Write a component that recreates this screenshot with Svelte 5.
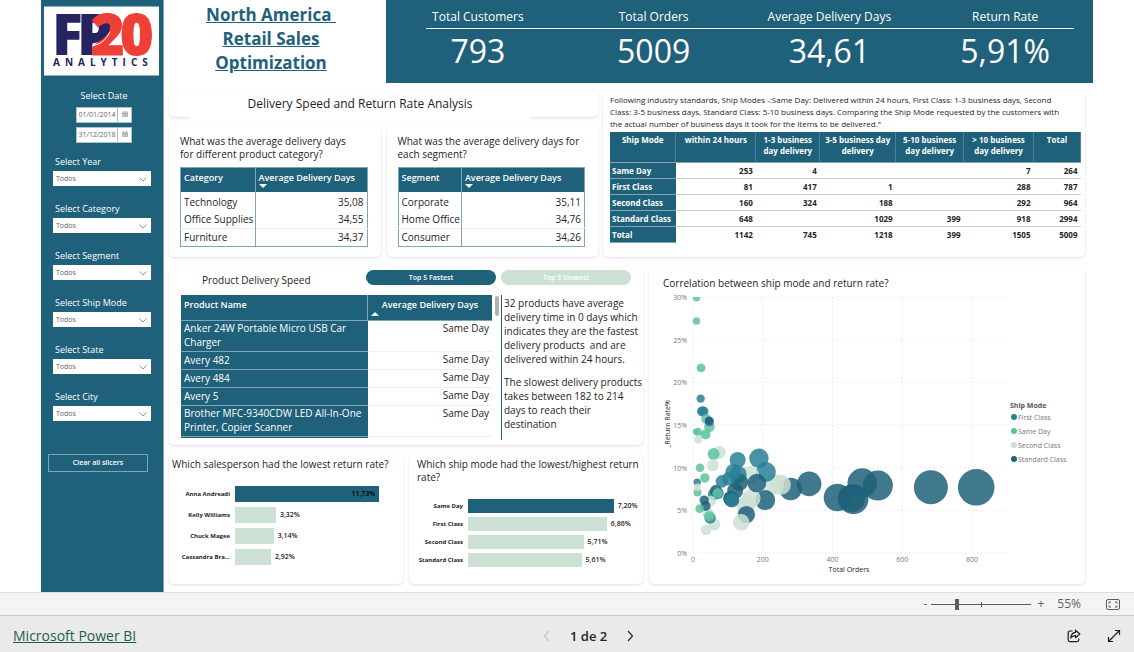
<script lang="ts">
    type Bubble = [orders: number, rate: number, radius: number];

    const slicers = ['Year', 'Category', 'Segment', 'Ship Mode', 'State', 'City'];
    const kpis = [
        { label: 'Total Customers', value: '793' },
        { label: 'Total Orders', value: '5009' },
        { label: 'Average Delivery Days', value: '34,61' },
        { label: 'Return Rate', value: '5,91%' }
    ];
    const dayTables = [
        {
            question: 'What was the average delivery days for different product category?',
            head: 'Category',
            first: 40,
            rows: [['Technology', '35,08'], ['Office Supplies', '34,55'], ['Furniture', '34,37']]
        },
        {
            question: 'What was the average delivery days for each segment?',
            head: 'Segment',
            first: 34,
            rows: [['Corporate', '35,11'], ['Home Office', '34,76'], ['Consumer', '34,26']]
        }
    ];
    const matrixHead = ['Ship Mode', 'within 24 hours', '1-3 business day delivery', '3-5 business day delivery', '5-10 business day delivery', '> 10 business day delivery', 'Total'];
    const matrixCols = [66, 80, 64, 76, 68, 70, 47];
    const matrix = [
        ['Same Day', '253', '4', '', '', '7', '264'],
        ['First Class', '81', '417', '1', '', '288', '787'],
        ['Second Class', '160', '324', '188', '', '292', '964'],
        ['Standard Class', '648', '', '1029', '399', '918', '2994'],
        ['Total', '1142', '745', '1218', '399', '1505', '5009']
    ];
    const products = [
        'Anker 24W Portable Micro USB Car Charger',
        'Avery 482',
        'Avery 484',
        'Avery 5',
        'Brother MFC-9340CDW LED All-In-One Printer, Copier Scanner'
    ];
    const salespeople = [
        { name: 'Anna Andreadi', rate: 11.73 },
        { name: 'Kelly Williams', rate: 3.32 },
        { name: 'Chuck Magee', rate: 3.14 },
        { name: 'Cassandra Bra...', rate: 2.92 }
    ];
    const shipModes = [
        { name: 'Same Day', rate: 7.2 },
        { name: 'First Class', rate: 6.86 },
        { name: 'Second Class', rate: 5.71 },
        { name: 'Standard Class', rate: 5.61 }
    ];

    const series: { name: string; color: string; points: Bubble[] }[] = [
        {
            name: 'First Class',
            color: '#2a8096',
            points: [[189, 11.1, 9.7], [209, 9.5, 10], [128, 10.9, 8], [116, 9.5, 8], [129, 9.2, 8.7], [102, 8.7, 6.7], [83, 8.4, 6.3], [60, 6.9, 6], [72, 7, 5.7], [12, 8.3, 3.7], [49, 4.1, 5.7], [22, 18.1, 4.2], [26, 16.6, 5], [30, 16.6, 5], [47, 15.4, 4.7], [112, 6.2, 7.3]]
        },
        {
            name: 'Same Day',
            color: '#5cc2a0',
            points: [[10, 29.9, 3.5], [10, 27.2, 3.7], [23, 21.7, 4.4], [38, 15.7, 5], [47, 14.8, 5.3], [36, 13.9, 5], [14, 14.2, 4], [8, 14.2, 3], [59, 11.6, 6], [20, 10, 4.3], [34, 8.8, 4.7], [13, 7.1, 4], [19, 5.2, 4.3], [70, 7, 5], [47, 4.3, 5.3]]
        },
        {
            name: 'Second Class',
            color: '#cce0d3',
            points: [[15, 13.3, 4], [76, 11.8, 6.3], [57, 10.3, 6], [163, 9.1, 9.3], [251, 8, 10.3], [232, 8, 10.3], [167, 6.4, 9.3], [156, 5.8, 9], [150, 5.4, 8.7], [138, 3.6, 8.3], [61, 3.3, 6], [37, 2.7, 5.3], [43, 4.6, 5.7], [51, 6.1, 5.3], [13, 7.7, 3.7]]
        },
        {
            name: 'Standard Class',
            color: '#1f607a',
            points: [[812, 7.7, 18.3], [682, 7.7, 17], [530, 7.9, 15], [485, 8.2, 14.7], [460, 6.3, 15], [454, 6.4, 13.7], [414, 6.5, 13.7], [333, 8.1, 12.3], [280, 7.5, 11.3], [207, 6.2, 10], [183, 8.2, 9.3], [153, 4.5, 8.7], [121, 7.3, 8], [133, 8.3, 8.7], [110, 6.3, 7.7], [108, 6.4, 7.5], [66, 7.3, 6], [32, 6.2, 4.7], [36, 5.5, 5], [46, 15.5, 4.2]]
        }
    ];
    // big bubbles first so the small ones stay visible
    const bubbles = series
        .flatMap(s => s.points.map(([orders, rate, r]) => ({ x: px(orders), y: py(rate), r, color: s.color })))
        .sort((a, b) => b.r - a.r);

    function px(orders: number) {
        return 44 + orders * 0.3488;
    }
    function py(rate: number) {
        return 263 - rate * 8.53;
    }
    function percent(n: number) {
        return n.toFixed(2).replace('.', ',') + '%';
    }

    let zoom = $state(55);
    let page = $state(1);
    let speed = $state('fastest');
</script>

{#snippet bars(rows, scale, kind)}
    <div class="bars {kind}">
        {#each rows as row, i}
            <span class="bar-label">{row.name}</span>
            <div class="track">
                <div class="bar" class:top={i === 0} style="width: {row.rate / scale * 100}%">
                    {#if row.rate > 10}{percent(row.rate)}{/if}
                </div>
                {#if row.rate <= 10}<span>{percent(row.rate)}</span>{/if}
            </div>
        {/each}
    </div>
{/snippet}

<div class="report">
    <aside>
        <svg class="logo" viewBox="0 0 115 69" role="img" aria-label="FP20 Analytics">
            <rect width="115" height="69" fill="#fff" />
            <text y="48" class="logo-main"><tspan class="navy" x="8 33">FP</tspan><tspan class="red" x="47 76">20</tspan></text>
            <path d="M48 37C55 36 61 32 66 24C65 18 60 17 55 20C55 26 52 29 47 30Z" fill="#272361" />
            <path d="M49 39C56 38 62 34 66 25" fill="none" stroke="#fff" stroke-width="1" />
            <text x="9" y="59" class="logo-sub">ANALYTICS</text>
        </svg>

        <fieldset class="dates">
            <legend>Select Date</legend>
            {#each ['01/01/2014', '31/12/2018'] as date}
                <div class="date">
                    <input type="text" value={date} aria-label="Date {date}">
                    <button aria-label="Open calendar">
                        <svg viewBox="0 0 8 8" width="6" height="6"><path d="M.5 1.5h7v6h-7zM.5 3.3h7M.5 5.2h7M3 3.3v4M5.2 3.3v4M2 .2v1.5M6 .2v1.5" fill="none" stroke="#889" stroke-width=".8" /></svg>
                    </button>
                </div>
            {/each}
        </fieldset>

        {#each slicers as slicer, i}
            <div class="slicer">
                <label for="slicer{i}">Select {slicer}</label>
                <div class="dropdown">
                    <select id="slicer{i}"><option>Todos</option></select>
                    <svg viewBox="0 0 8 5" width="8" height="5"><path d="M.5.5 4 4 7.5.5" fill="none" stroke="#667" stroke-width=".7" /></svg>
                </div>
            </div>
        {/each}
        <button class="clear">Clear all slicers</button>
    </aside>

    <main>
        <header>
            <h1>North America&nbsp;<br>Retail Sales<br>Optimization</h1>
            <div class="kpis">
                {#each kpis as kpi}
                    <span class="kpi-label">{kpi.label}</span>
                {/each}
                <div class="rule"></div>
                {#each kpis as kpi}
                    <strong>{kpi.value}</strong>
                {/each}
            </div>
        </header>

        <div class="row upper">
            <div class="stack">
                <div class="card heading"><h2>Delivery Speed and Return Rate Analysis</h2></div>
                <div class="pair">
                    {#each dayTables as t}
                        <section class="card days">
                            <h3>{t.question}</h3>
                            <table>
                                <colgroup><col style="width: {t.first}%"><col></colgroup>
                                <thead>
                                    <tr><th>{t.head}</th><th>Average Delivery Days<i class="down"></i></th></tr>
                                </thead>
                                <tbody>
                                    {#each t.rows as [name, value]}
                                        <tr><td>{name}</td><td class="num">{value}</td></tr>
                                    {/each}
                                </tbody>
                            </table>
                        </section>
                    {/each}
                </div>
            </div>
            <section class="card matrix">
                <p>Following industry standards, Ship Modes -:Same Day: Delivered within 24 hours, First Class: 1-3 business days, Second Class: 3-5 business days, Standard Class: 5-10 business days. Comparing the Ship Mode requested by the customers with the actual number of business days it took for the items to be delivered."</p>
                <table>
                    <colgroup>
                        {#each matrixCols as w}<col style="width: {w / 4.71}%">{/each}
                    </colgroup>
                    <thead>
                        <tr>{#each matrixHead as h}<th>{h}</th>{/each}</tr>
                    </thead>
                    <tbody>
                        {#each matrix as [mode, ...cells]}
                            <tr>
                                <th>{mode}</th>
                                {#each cells as cell}<td>{cell}</td>{/each}
                            </tr>
                        {/each}
                    </tbody>
                </table>
            </section>
        </div>

        <div class="row lower">
            <div class="stack">
                <section class="card products">
                    <div class="tabs">
                        <h3>Product Delivery Speed</h3>
                        <button class:off={speed !== 'fastest'} onclick={() => speed = 'fastest'}>Top 5 Fastest</button>
                        <button class:off={speed !== 'slowest'} onclick={() => speed = 'slowest'}>Top 5 Slowest</button>
                    </div>
                    <div class="split">
                        <div class="scroll">
                            <table>
                                <colgroup><col style="width: 60%"><col></colgroup>
                                <thead>
                                    <tr><th>Product Name</th><th class="sorted">Average Delivery Days<i class="up"></i></th></tr>
                                </thead>
                                <tbody>
                                    {#each products as product}
                                        <tr><th>{product}</th><td class="num">Same Day</td></tr>
                                    {/each}
                                    <tr><th></th><td></td></tr>
                                </tbody>
                            </table>
                        </div>
                        <div class="thumb"></div>
                        <div class="note">
                            <p>32 products have average delivery time in 0 days which indicates they are the fastest delivery products&nbsp; and are delivered within 24 hours.</p>
                            <p>The slowest delivery products takes between 182 to 214 <br>days to reach their <br>destination</p>
                        </div>
                    </div>
                </section>
                <div class="pair">
                    <section class="card chart">
                        <h3>Which salesperson had the lowest return rate?</h3>
                        {@render bars(salespeople, 13.4, 'people')}
                    </section>
                    <section class="card chart">
                        <h3>Which ship mode had the lowest/highest return rate?</h3>
                        {@render bars(shipModes, 8.5, 'modes')}
                    </section>
                </div>
            </div>

            <section class="card scatter">
                <h3>Correlation between ship mode and return rate?</h3>
                <svg viewBox="0 0 436 286">
                    <clipPath id="plot"><rect x="38" y="7" width="330" height="260" /></clipPath>
                    <g class="grid">
                        {#each [0, 5, 10, 15, 20, 25, 30] as r}
                            <line x1="44" x2="357" y1={py(r)} y2={py(r)} />
                            <text x="38" y={py(r) + 3} text-anchor="end">{r}%</text>
                        {/each}
                        {#each [0, 200, 400, 600, 800] as o}
                            <line x1={px(o)} x2={px(o)} y1="7" y2="263" />
                            <text x={px(o)} y="272" text-anchor="middle">{o}</text>
                        {/each}
                    </g>
                    <g clip-path="url(#plot)">
                        {#each bubbles as b}
                            <circle cx={b.x} cy={b.y} r={b.r} fill={b.color} fill-opacity=".85" />
                        {/each}
                    </g>
                    <text class="axis" x="200" y="282" text-anchor="middle">Total Orders</text>
                    <text class="axis" transform="translate(21 134) rotate(-90)" text-anchor="middle">_Return Rate%</text>
                    <text class="legend-title" x="361" y="118">Ship Mode</text>
                    {#each series as s, i}
                        <circle cx="365" cy={127 + i * 14} r="3" fill={s.color} />
                        <text class="legend" x="369" y={130 + i * 14}>{s.name}</text>
                    {/each}
                </svg>
            </section>
        </div>
    </main>
</div>

<div class="zoombar">
    <button aria-label="Zoom out" onclick={() => zoom -= 5}>-</button>
    <input type="range" min="10" max="190" bind:value={zoom} aria-label="Zoom">
    <button aria-label="Zoom in" onclick={() => zoom += 5}>+</button>
    <span>{zoom}%</span>
    <button class="fit" aria-label="Fit to page">
        <svg viewBox="0 0 14 11" width="14" height="11"><rect x=".5" y=".5" width="13" height="10" rx="1.5" fill="none" stroke="#605e5c" /><path d="M3 4.5V3h2M9 3h2v1.5M11 6.5V8H9M5 8H3V6.5" fill="none" stroke="#605e5c" /></svg>
    </button>
</div>

<footer>
    <a href="https://powerbi.microsoft.com">Microsoft Power BI</a>
    <nav>
        <button disabled={page === 1} onclick={() => page--} aria-label="Previous page">
            <svg viewBox="0 0 7 12" width="7" height="12"><path d="M6 1 1.5 6 6 11" fill="none" stroke="currentColor" stroke-width="1.2" /></svg>
        </button>
        <span>{page} de 2</span>
        <button disabled={page === 2} onclick={() => page++} aria-label="Next page">
            <svg viewBox="0 0 7 12" width="7" height="12"><path d="M1 1 5.5 6 1 11" fill="none" stroke="currentColor" stroke-width="1.2" /></svg>
        </button>
    </nav>
    <div class="actions">
        <button aria-label="Share">
            <svg viewBox="0 0 14 14" width="14" height="14"><path d="M5.5 2H3A1.8 1.8 0 0 0 1.2 3.8v7A1.8 1.8 0 0 0 3 12.6h7a1.8 1.8 0 0 0 1.8-1.8V9.5M8.5 1.2 12.8 5 8.5 8.7V6.6C6.5 6.5 5 7.2 3.8 9 4 5.6 5.8 3.6 8.5 3.3Z" fill="none" stroke="#1b1a19" stroke-width="1.2" stroke-linejoin="round" /></svg>
        </button>
        <button aria-label="Full screen">
            <svg viewBox="0 0 14 14" width="14" height="14"><path d="M1.5 12.5 12.5 1.5M8 1.5h4.5V6M1.5 8v4.5H6" fill="none" stroke="#1b1a19" stroke-width="1.2" /></svg>
        </button>
    </div>
</footer>

<style>
    :global(body) {
        margin: 0;
        background: #fff;
    }
    :global(#app) {
        --teal: #1f607a;
        --mint: #cce0d3;
        --line: #7fa6b4;
        font-family: "Open Sans", "Noto Sans", sans-serif;
        font-size: 10px;
        line-height: 14px;
        color: #252423;
    }
    button, input, select {
        font: inherit;
        color: inherit;
        padding: 0;
        margin: 0;
        border: 0;
        background: none;
        border-radius: 0;
    }
    h1, h2, h3, p {
        margin: 0;
        font-weight: 400;
    }
    h3 {
        font-size: 10px;
        line-height: 13px;
    }
    table {
        width: 100%;
        border-collapse: collapse;
        table-layout: fixed;
    }
    td, th {
        padding: 0 3px;
        text-align: left;
        font-weight: 400;
    }

    .report {
        display: flex;
        min-height: 592px;
        padding: 0 41px;
    }
    aside {
        box-sizing: border-box;
        width: 123px;
        flex: none;
        padding: 6px 3px 0;
        background: var(--teal);
        border-right: 1px solid var(--line);
        color: #fff;
        font-size: 9px;
        line-height: 12px;
    }
    .logo {
        display: block;
        width: 115px;
        height: 70px;
    }
    .logo-main {
        font: 800 57px "Open Sans", sans-serif;
    }
    .navy {
        fill: #272361;
    }
    .red {
        fill: #ee4036;
        stroke: #ee4036;
    }
    .logo-sub {
        font: 700 10px "Open Sans", sans-serif;
        letter-spacing: 5px;
        fill: #272361;
    }
    .dates {
        border: 0;
        margin: 14px 0 13px;
        padding: 0 0 0 4px;
        display: flex;
        flex-direction: column;
        align-items: center;
        gap: 4px;
    }
    legend {
        margin: 0 auto;
        padding: 0 0 5px;
    }
    .date {
        display: flex;
        height: 14px;
        border: 1px solid #a9c3cd;
        background: #fff;
        color: #666;
        font-size: 7px;
    }
    .date input {
        width: 40px;
        text-align: center;
    }
    .date button {
        width: 14px;
        border-left: 1px solid #bbb;
        line-height: 8px;
    }
    .slicer {
        margin: 0 9px 17px;
    }
    .slicer label {
        display: block;
        padding: 0 2px 3px;
    }
    .dropdown {
        position: relative;
        display: flex;
    }
    .dropdown select {
        appearance: none;
        width: 100%;
        height: 15px;
        padding: 0 3px;
        background: #fff;
        color: #666;
        font-size: 7px;
    }
    .dropdown svg {
        position: absolute;
        right: 4px;
        top: 6px;
        pointer-events: none;
    }
    .clear {
        display: block;
        width: 100px;
        height: 18px;
        margin: 33px 4px 0;
        border: 1px solid var(--line);
        font-size: 7px;
        font-weight: 600;
    }

    main {
        flex: 1;
        min-width: 0;
    }
    header {
        display: flex;
        min-height: 83px;
    }
    h1 {
        width: 214px;
        padding: 3px 8px 0 0;
        color: var(--teal);
        font-size: 17px;
        line-height: 24px;
        font-weight: 700;
        text-align: center;
        text-decoration: underline;
    }
    .kpis {
        flex: 1;
        display: grid;
        grid-template-columns: repeat(4, 1fr);
        align-content: start;
        padding: 8px 0 0 4px;
        background: var(--teal);
        color: #fff;
        text-align: center;
    }
    .kpi-label {
        font-size: 12px;
        line-height: 17px;
        padding-bottom: 3px;
    }
    .rule {
        grid-column: 1 / -1;
        height: 1px;
        margin: 0 19px 0 36px;
        background: #fff;
    }
    .kpis strong {
        font-size: 32px;
        line-height: 44px;
        font-weight: 400;
    }

    .row {
        display: grid;
        padding: 0 8px 0 5px;
    }
    .upper {
        grid-template-columns: 429fr 482fr;
        gap: 5px;
        padding-top: 8px;
    }
    .lower {
        grid-template-columns: 474fr 436fr;
        gap: 6px;
        padding-top: 10px;
    }
    .stack {
        display: flex;
        flex-direction: column;
        gap: 8px;
        min-width: 0;
    }
    .lower .stack {
        gap: 10px;
    }
    .pair {
        display: grid;
        grid-template-columns: 1fr 1fr;
        gap: 6px;
        flex: 1;
    }
    .card {
        min-width: 0;
        box-sizing: border-box;
        border-radius: 5px;
        background: #fff;
        box-shadow: 0 1px 3px #e2d9f3;
    }
    .heading {
        height: 26px;
    }
    h2 {
        height: 30px;
        margin: 0 68px 0 21px;
        background: #fff;
        font-size: 12px;
        line-height: 25px;
        text-align: center;
    }

    .days {
        height: 132px;
        padding: 10px 13px 0 11px;
    }
    .days h3 {
        padding-right: 8px;
    }
    .days + .days h3 {
        padding-right: 0;
    }
    .days table {
        margin-top: 6px;
        border: 1px solid var(--line);
    }
    .days thead th {
        height: 20px;
        padding-top: 4px;
        background: var(--teal);
        color: #fff;
        font-size: 9px;
        font-weight: 600;
        line-height: 12px;
        vertical-align: top;
        white-space: nowrap;
    }
    .days td {
        height: 17px;
        line-height: 17px;
        white-space: nowrap;
    }
    .days tbody tr:first-child td {
        padding-top: 2px;
    }
    .days th + th, .days td + td {
        border-left: 1px solid var(--line);
    }
    .days tr:last-child td {
        border-top: 1px solid #eee;
    }
    .num {
        text-align: right;
    }
    i {
        display: block;
        width: 0;
        height: 0;
        border: 4px solid transparent;
    }
    .down {
        border-top-color: #fff;
        border-bottom: 0;
    }
    .up {
        border-bottom-color: #fff;
        border-top: 0;
    }

    .matrix {
        padding: 3px 4px 0 7px;
    }
    .matrix p {
        padding: 0 10px 2px 0;
        font-size: 8px;
        line-height: 12px;
    }
    .matrix th, .matrix td {
        padding: 0 3px;
        height: 15px;
        line-height: 12px;
        font-size: 8px;
        font-weight: 700;
        border-bottom: 1px solid #ccc;
    }
    .matrix th {
        background: var(--teal);
        color: #fff;
        padding: 0 2px;
        border-color: var(--line);
        white-space: nowrap;
    }
    .matrix thead th {
        height: 28px;
        padding-top: 2px;
        line-height: 11px;
        vertical-align: top;
        text-align: center;
        white-space: normal;
        border-right: 1px solid #4b8095;
    }
    .matrix td {
        text-align: right;
    }
    .matrix tr:last-child td {
        border: 0;
    }

    .products {
        height: 178px;
        padding: 3px 0 0 12px;
    }
    .tabs {
        display: flex;
        gap: 5px;
        padding-right: 12px;
    }
    .tabs h3 {
        flex: 1;
        padding: 4px 0 0 21px;
    }
    .tabs button {
        width: 130px;
        height: 15px;
        border-radius: 8px;
        background: var(--teal);
        color: #fff;
        font-size: 7px;
        font-weight: 600;
    }
    .tabs button.off {
        background: var(--mint);
    }
    .split {
        display: flex;
        margin-top: 8px;
    }
    .scroll {
        flex: 1;
        height: 143px;
        overflow: hidden;
    }
    .products th {
        background: var(--teal);
        color: #fff;
        border-bottom: 1px solid var(--line);
        padding-bottom: 2px;
        line-height: 14px;
        font-weight: 500;
    }
    .products thead th {
        height: 21px;
        padding-top: 2px;
        vertical-align: top;
        font-weight: 600;
        font-size: 9px;
        line-height: 16px;
        white-space: nowrap;
    }
    .products .sorted {
        border-left: 1px solid var(--line);
        text-align: center;
    }
    .sorted i {
        margin-top: -1px;
    }
    .products td {
        height: 17px;
        vertical-align: top;
        border-bottom: 1px solid #eee;
    }
    .thumb {
        width: 4px;
        height: 20px;
        margin: 1px 2px 0 3px;
        border-radius: 2px;
        background: #b3b0ad;
    }
    .note {
        width: 139px;
        padding-left: 2px;
        border-left: 1px solid var(--teal);
    }
    .note p {
        margin: 1px 0 9px;
    }

    .chart {
        min-height: 129px;
        padding: 3px 3px 0 3px;
    }
    .chart + .chart {
        padding-left: 8px;
    }
    .bars {
        display: grid;
        grid-template-columns: 58px 1fr;
        column-gap: 5px;
        row-gap: 5px;
        align-items: center;
        margin-top: 15px;
        font-size: 7px;
        line-height: 8px;
        font-weight: 600;
    }
    .modes {
        grid-template-columns: 46px 1fr;
        margin-top: 15px;
        row-gap: 4px;
    }
    .bar-label {
        font-size: 6px;
        font-weight: 700;
        text-align: right;
        white-space: nowrap;
    }
    .track {
        display: flex;
        align-items: center;
        gap: 4px;
    }
    .bar {
        box-sizing: border-box;
        height: 16px;
        padding-right: 4px;
        line-height: 16px;
        text-align: right;
        background: var(--mint);
    }
    .modes .bar {
        height: 14px;
    }
    .bar.top {
        background: var(--teal);
        color: #000;
    }

    .scatter {
        min-height: 317px;
        padding-top: 10px;
    }
    .scatter h3 {
        padding-left: 14px;
    }
    .scatter svg {
        display: block;
        width: 100%;
    }
    .grid line {
        stroke: #ddd;
        stroke-dasharray: 1 3;
    }
    .grid text, .legend {
        font-size: 7px;
        fill: #777;
    }
    .axis {
        font-size: 7px;
        fill: #252423;
    }
    .legend-title {
        font-size: 7px;
        font-weight: 700;
        fill: #555;
    }

    .zoombar {
        display: flex;
        align-items: center;
        justify-content: flex-end;
        box-sizing: border-box;
        height: 24px;
        padding-right: 14px;
        border-top: 1px solid #e1dfdd;
        border-bottom: 1px solid #c8c6c4;
        background: #f4f4f4;
        color: #605e5c;
        font-size: 12px;
    }
    .zoombar input {
        appearance: none;
        width: 100px;
        height: 11px;
        margin: 0 6px 0 4px;
        background:
            linear-gradient(#605e5c, #605e5c) center / 1px 5px no-repeat,
            linear-gradient(#605e5c, #605e5c) center / 100% 1px no-repeat;
    }
    .zoombar input::-webkit-slider-thumb {
        appearance: none;
        width: 4px;
        height: 11px;
        background: #605e5c;
    }
    .zoombar span {
        margin: 0 25px 0 13px;
    }
    .fit {
        display: flex;
    }

    footer {
        display: flex;
        align-items: center;
        justify-content: space-between;
        height: 36px;
        padding: 3px 13px 0;
        box-sizing: border-box;
        background: #eaeaea;
        font-size: 13px;
    }
    footer a {
        color: #1f5f4f;
        font-size: 14px;
    }
    nav {
        display: flex;
        align-items: center;
        gap: 20px;
        padding-right: 26px;
        font-weight: 600;
    }
    nav button:disabled {
        color: #c8c6c4;
    }
    nav button, .actions button {
        display: flex;
    }
    .actions {
        display: flex;
        gap: 26px;
    }
</style>
